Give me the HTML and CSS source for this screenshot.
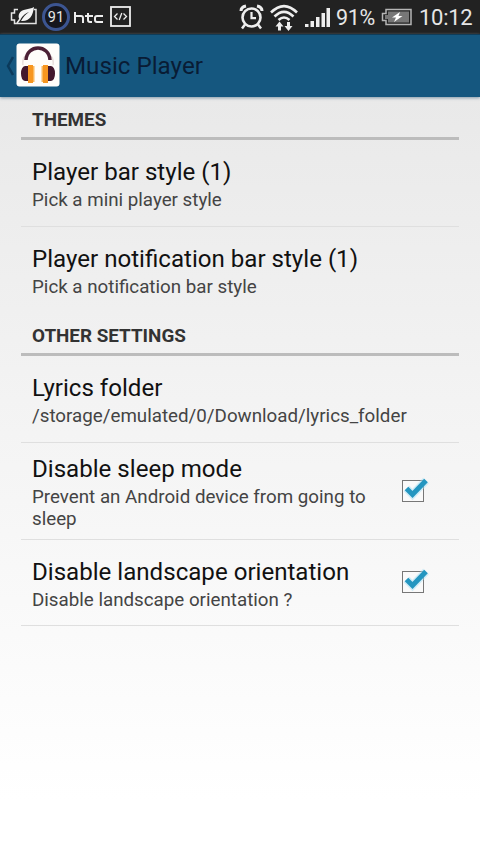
FILE: index.html
```
<!DOCTYPE html>
<html lang="en">
<head>
<meta charset="utf-8">
<title>Music Player</title>
<link rel="stylesheet" href="styles.css">
</head>
<body>
<header class="status">
  <svg class="leaf" width="28" height="20" viewBox="0 0 28 20">
    <path d="M8 2.500H4.500V6H1.500v7h3v3.500H26V2.500h-2" fill="none" stroke="#e4e4e4" stroke-width="1.500"/>
    <path d="M24 0C19 3 12 1 9 7c-1 3 0 5 1 6C13 8 16 6 19 5c-3 2-6 5-8 9 8 1 12-5 13-14z" fill="#f4f4f4"/>
    <path d="M7 16l3-4" stroke="#eee" stroke-width="1.500"/>
  </svg>
  <span class="ring">91</span>
  <svg class="htc" width="30" height="13" viewBox="0 0 30 13" fill="none" stroke="#eee" stroke-width="2">
    <path d="M1 0v11M1 4h6q2 0 2 2v5M14 1v7q0 2 2 2h2M11 4h8M29 4h-6q-2 0-2 2v2q0 2 2 2h6"/>
  </svg>
  <svg class="code" width="22" height="22" viewBox="0 0 22 22" fill="none" stroke="#eee">
    <rect x="1" y="1" width="19" height="19" stroke-width="1.800"/>
    <path d="M7.500 7.500L4.500 10.500l3 3M13.500 7.500l3 3-3 3M11.800 7l-2.600 7" stroke-width="1.300"/>
  </svg>
  <svg class="alarm" width="25" height="26" viewBox="0 0 25 26" fill="none" stroke="#eee">
    <circle cx="12.500" cy="13.500" r="9" stroke-width="2.600"/>
    <path d="M12.500 8v6.200h4.500" stroke-width="2.200"/>
    <path d="M2 7Q2 3 7 2M23 7q0-4-5-5" stroke-width="3"/>
    <path d="M6 20.500l-3 4M19 20.500l3 4" stroke-width="2.500"/>
  </svg>
  <svg class="wifi" width="28" height="28" viewBox="0 0 28 28" fill="none" stroke="#eee" stroke-width="2.600">
    <path d="M1 8.500Q14-4.500 27 8.500M4.500 12.500q9.500-9.500 19 0M8.500 16q5.500-5 11 0"/>
    <path d="M9.500 17.500l4 5h-2.500v4h-3v-4H5.500zM18.500 27l4-5h-2.500v-4h-3v4h-2.500z" fill="#eee" stroke="none"/>
  </svg>
  <svg class="signal" width="26" height="21" viewBox="0 0 26 21" fill="#eee">
    <path d="M0 17h3.500v3H0zM5.500 14H9v6H5.500zM11 10h3.500v10H11zM16.500 6H20v14h-3.500zM21.500 1H25v19h-3.500z"/>
  </svg>
  <span class="percent">91%</span>
  <svg class="battery" width="31" height="18" viewBox="0 0 31 18">
    <path d="M5 1.500h25v15H5v-4H1.500v-7H5z" fill="none" stroke="#b5b5b5" stroke-width="1.500"/>
    <path d="M7 3.500h21v11H7v-3.500H4V7h3z" fill="#777"/>
    <path d="M19 4l-8 5.500h4L13 14l8.500-6h-4z" fill="#fff"/>
  </svg>
  <span class="clock">10:12</span>
</header>
<nav class="bar">
  <svg class="back" width="8" height="20" viewBox="0 0 8 20"><path d="M7 1L2 10l5 9" fill="none" stroke="#0b3a5b" stroke-width="2.500"/></svg>
  <svg class="logo" width="44" height="44" viewBox="0 0 44 44">
    <rect x=".5" y=".5" width="43" height="43" rx="3" fill="#fffdfa"/>
    <path d="M7 22q-1-5 2-9M37 22q1-5-2-9" fill="none" stroke="#e9dfdc" stroke-width="1.500"/>
    <path d="M10 17C11 1 33 1 34 17" fill="none" stroke="#4c2035" stroke-width="3.500"/>
    <path d="M12 23H9q-4 1-4 7.500T9 38h3zM32 23h3q4 1 4 7.500T35 38h-3z" fill="#43182d"/>
    <path d="M12 22h5v18h-5zM27 22h5v18h-5z" fill="#f79620"/>
    <path d="M17 23h1.500v16H17zM25.500 23H27v16h-1.500z" fill="#fbb85c"/>
  </svg>
  <h1>Music Player</h1>
</nav>
<main>
  <h2>THEMES</h2>
  <section class="row"><div class="text"><h3>Player bar style (1)</h3><p>Pick a mini player style</p></div></section>
  <section class="row last"><div class="text"><h3>Player notification bar style (1)</h3><p>Pick a notification bar style</p></div></section>
  <h2>OTHER SETTINGS</h2>
  <section class="row"><div class="text"><h3>Lyrics folder</h3><p>/storage/emulated/0/Download/lyrics_folder</p></div></section>
  <section class="row tall"><div class="text"><h3>Disable sleep mode</h3><p>Prevent an Android device from going to<br>sleep</p></div>
    <svg class="check" width="32" height="30" viewBox="0 0 32 30"><rect x="4.500" y="6.500" width="21" height="21" fill="#fafafa" stroke="#777"/><path class="glow" d="M8.500 14.500l6 6L28 6.500"/><path class="tick" d="M8.500 14.500l6 6L28 6.500"/></svg></section>
  <section class="row end"><div class="text"><h3>Disable landscape orientation</h3><p>Disable landscape orientation ?</p></div>
    <svg class="check" width="32" height="30" viewBox="0 0 32 30"><rect x="4.500" y="6.500" width="21" height="21" fill="#fafafa" stroke="#777"/><path class="glow" d="M8.500 14.500l6 6L28 6.500"/><path class="tick" d="M8.500 14.500l6 6L28 6.500"/></svg></section>
</main>
</body>
</html>
```
FILE: styles.css
```
* { box-sizing: border-box; }
body { margin: 0; width: 480px; height: 854px; overflow: hidden; font-family: Roboto, sans-serif; background: linear-gradient(#e9e9e9 97px, #f3f3f3 400px, #ffffff 800px); }
h1, h2, h3, p { margin: 0; font-weight: 400; white-space: nowrap; }
svg { display: block; flex: none; }
.status { display: flex; align-items: center; height: 34px; padding-left: 10px; background: #222; color: #e6e6e6; }
.ring { width: 28px; height: 28px; margin-left: 4px; border: 3px solid #3c5591; border-radius: 50%; background: #15161d; font-size: 14.500px; line-height: 23px; text-align: center; flex: none; }
.htc { margin: 2px 0 0 4px; }
.code { margin-left: 6px; }
.alarm { margin-left: 107px; }
.wifi { margin: 1px 0 0 6px; }
.signal { margin: 1px 0 0 7px; }
.percent { width: 41px; margin: 1px 0 0 5px; font-size: 21.500px; line-height: 26px; letter-spacing: -.3px; }
.battery { margin-left: 4px; }
.clock { margin: 1px 0 0 7px; font-size: 22px; line-height: 26px; letter-spacing: -.3px; }
.bar { display: flex; align-items: center; height: 63px; padding: 0 0 1px 6px; background: #15577f; border-top: 1px solid #103c58; box-shadow: 0 1px 3px #8298a8; }
.logo { margin: -1px 0 0 2px; }
h1 { margin: 1px 0 0 5px; font-size: 24.200px; line-height: 32px; color: #091c35; }
main { padding: 0 21px; }
h2 { height: 43px; padding: 12px 11px 0; border-bottom: 3px solid #bcbcbc; font-size: 18.850px; line-height: 22px; font-weight: 700; color: #333; }
.row { display: flex; align-items: center; height: 87px; padding: 3px 11px 0; border-bottom: 1px solid #dfdfdf; }
.last { height: 86px; border-bottom: 0; }
.tall { height: 97px; }
.end { height: 86px; }
.text { flex: 1; }
h3 { margin-top: -1px; font-size: 24.100px; line-height: 31px; color: #111; }
p { margin-top: 1px; font-size: 18.750px; line-height: 22px; color: #444; }
.check { margin: -8px 18px 0 0; }
.glow { fill: none; stroke: #a5dff5; stroke-width: 8; stroke-opacity: .5; }
.tick { fill: none; stroke: #2496c0; stroke-width: 5; }
```
